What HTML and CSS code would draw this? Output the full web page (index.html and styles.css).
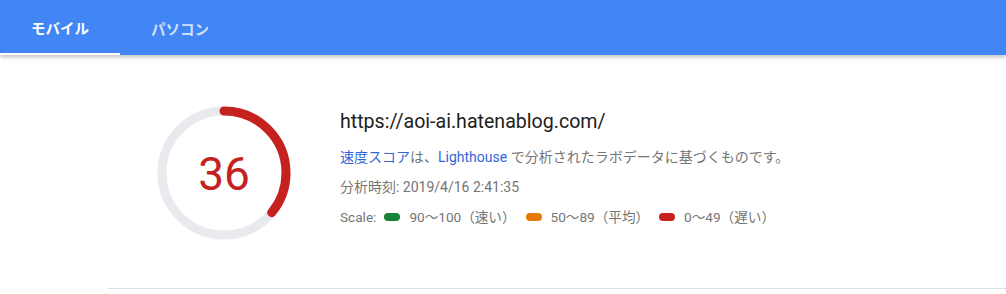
FILE: index.html
```html
<!DOCTYPE html>
<html lang="ja">
<head>
<meta charset="utf-8">
<link rel="stylesheet" href="styles.css">
</head>
<body>
<header class="tabs">
  <div class="tab active">モバイル</div>
  <div class="tab">パソコン</div>
</header>
<main class="content">
  <div class="summary">
    <div class="gauge">
      <svg width="134" height="134" viewBox="0 0 134 134">
        <circle cx="67" cy="67" r="62" fill="none" stroke="#e8eaed" stroke-width="9"/>
        <circle cx="67" cy="67" r="62" fill="none" stroke="#c5221f" stroke-width="9" stroke-linecap="round"
          stroke-dasharray="140.2 389.6" transform="rotate(-90 67 67)"/>
      </svg>
      <div class="score">36</div>
    </div>
    <div class="info">
      <div class="url">https://aoi-ai.hatenablog.com/</div>
      <div class="desc"><span class="link">速度スコア</span>は、<span class="link">Lighthouse</span> で分析されたラボデータに基づくものです。</div>
      <div class="time">分析時刻: 2019/4/16 2:41:35</div>
      <div class="scale">
        <span>Scale:</span>
        <span class="item"><i class="dot green"></i>90～100（速い）</span>
        <span class="item"><i class="dot orange"></i>50～89（平均）</span>
        <span class="item"><i class="dot red"></i>0～49（遅い）</span>
      </div>
    </div>
  </div>
  <div class="divider"></div>
</main>
</body>
</html>
```

FILE: styles.css
```css
html, body {
  margin: 0;
  padding: 0;
  background: #fff;
  font-family: Roboto, "Noto Sans CJK JP", sans-serif;
}
.tabs {
  display: flex;
  height: 55px;
  background: #4285f4;
  box-shadow: 0 2px 4px rgba(0,0,0,0.25);
  position: relative;
}
.tab {
  width: 120px;
  display: flex;
  align-items: center;
  justify-content: center;
  color: rgba(255,255,255,0.75);
  font-size: 14.5px;
  font-weight: bold;
  box-sizing: border-box;
  padding-top: 2px;
}
.tab.active {
  color: #fff;
  border-bottom: 2px solid #fff;
}
.content {
  padding-top: 51px;
}
.summary {
  display: flex;
  padding-left: 157px;
  height: 182px;
}
.gauge {
  position: relative;
  width: 134px;
  height: 134px;
}
.gauge svg {
  display: block;
}
.score {
  position: absolute;
  inset: 0;
  display: flex;
  align-items: center;
  justify-content: center;
  font-size: 46px;
  color: #c5221f;
  padding-top: 1px;
}
.info {
  margin-left: 49px;
  padding-top: 4px;
}
.url {
  font-size: 19.6px;
  color: #212121;
  line-height: 24px;
}
.desc {
  margin-top: 13px;
  font-size: 14px;
  line-height: 20px;
  color: #757575;
}
.link {
  color: #3367d6;
}
.time {
  margin-top: 10px;
  font-size: 14px;
  line-height: 20px;
  color: #757575;
}
.scale {
  margin-top: 10px;
  font-size: 13.6px;
  line-height: 20px;
  color: #757575;
  display: flex;
  gap: 8px;
}
.item {
  display: inline-flex;
  align-items: center;
  margin-right: 2px;
}
.dot {
  display: inline-block;
  width: 16px;
  height: 8px;
  border-radius: 4px;
  margin-right: 9px;
}
.green { background: #178239; }
.orange { background: #e67700; }
.red { background: #c7221f; }
.divider {
  margin-left: 108px;
  border-top: 1px solid #dadce0;
}
```
